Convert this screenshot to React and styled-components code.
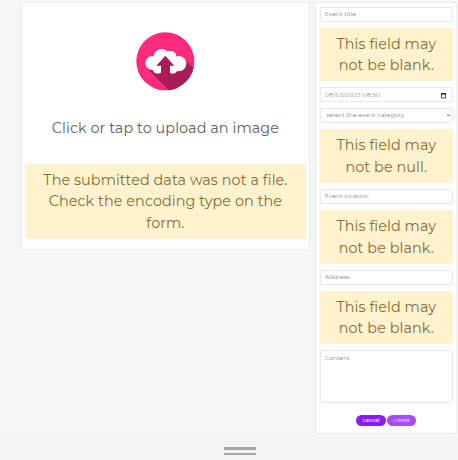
import React from "react";
import styled, { createGlobalStyle } from "styled-components";

const GlobalStyle = createGlobalStyle`
  * { box-sizing: border-box; }
  body {
    margin: 0;
    background: #f3f7f8;
    font-family: Montserrat, Inter, "Liberation Sans", sans-serif;
  }
`;

const Page = styled.div`
  height: 460px;
  display: flex;
  flex-direction: column;
  overflow: hidden;
`;

const Columns = styled.main`
  height: 437px;
  padding: 2px 1px 0 21px;
  display: flex;
  align-items: flex-start;
  gap: 5px;
`;

const Panel = styled.section`
  background: #fff;
  border: 1px solid #e9edee;
  border-radius: 2px;
`;

const UploadPanel = styled(Panel)`
  width: 289px;
  height: 248px;
  padding: 29px 3.4px 0 3.2px;
  display: flex;
  flex-direction: column;
  align-items: center;
`;

const FormPanel = styled(Panel)`
  width: 142px;
  height: 432px;
  padding: 3.6px 3px 0 3.5px;
  display: flex;
  flex-direction: column;
  gap: 6px;
`;

const UploadIcon = styled.svg`
  width: 60px;
  height: 60px;
  flex: none;
`;

const UploadLabel = styled.div`
  margin: 25px 0 25px;
  font-size: 14.4px;
  font-weight: 400;
  line-height: 22px;
  letter-spacing: 0.06px;
  color: #5c6268;
  white-space: nowrap;
`;

const Alert = styled.div`
  width: 100%;
  height: ${(p) => p.$height || 53.7}px;
  padding-top: ${(p) => p.$top || 6.1}px;
  flex: none;
  background: #fff2cf;
  border-radius: 2px;
  color: #8a6c30;
  font-size: 14.4px;
  font-weight: 400;
  line-height: 21.6px;
  letter-spacing: 0.06px;
  text-align: center;
  white-space: nowrap;
`;

const Field = styled.div`
  height: ${(p) => p.$height || 15}px;
  flex: none;
  padding: 0.6px 4.6px 0;
  display: flex;
  align-items: center;
  justify-content: space-between;
  border: 1px solid #e7eaec;
  border-radius: 2px;
  color: #7d858d;
  font-size: 6.1px;
  line-height: 13px;
  letter-spacing: ${(p) => p.$spacing || 0}px;
  white-space: nowrap;
`;

const SelectField = styled(Field)`
  padding: 0 1px 0 6px;
`;

const ContentField = styled(Field)`
  align-items: flex-start;
`;

const SmallIcon = styled.svg`
  width: ${(p) => p.$size}px;
  height: ${(p) => p.$size}px;
  flex: none;
`;

const Actions = styled.div`
  margin-top: 6px;
  display: flex;
  justify-content: center;
  gap: 1px;
`;

const Button = styled.button`
  width: 29.5px;
  height: 11px;
  padding: 0;
  border: 0;
  border-radius: 6px;
  background: ${(p) => (p.$muted ? "#a84bff" : "#8c1aff")};
  color: ${(p) => (p.$muted ? "#ead5ff" : "#fff")};
  font: 500 5.2px/11px Montserrat, Inter, sans-serif;
`;

const Footer = styled.footer`
  height: 23px;
  background: #f1f3f5;
  padding: 10px 0 0 224px;
  display: flex;
  flex-direction: column;
  gap: 3px;
`;

const Grip = styled.div`
  width: 32px;
  height: 2.5px;
  background: #a6a6a6;
`;

function CloudUpload() {
  return (
    <UploadIcon viewBox="-3 0 180 180">
      <defs>
        <clipPath id="disc"><circle cx="88" cy="88" r="87" /></clipPath>
      </defs>
      <circle cx="88" cy="88" r="87" fill="#ff2a7b" />
      <path clipPath="url(#disc)" d="M35 110 L103 180 H180 V114 L142 80 Z" fill="#a81d57" />
      <g fill="#fff">
        <circle cx="49" cy="93" r="21" />
        <circle cx="77" cy="76" r="25" />
        <circle cx="104" cy="73" r="17" />
        <circle cx="128" cy="95" r="23" />
        <circle cx="65" cy="110" r="15" />
        <circle cx="110" cy="110" r="15" />
        <path d="M48 80 H124 V116 H54 Z" />
      </g>
      <path d="M88 71 L115 101 H102 V128 H75 V101 H61 Z" fill="#a81d57" />
    </UploadIcon>
  );
}

function BlankAlert({ word = "blank" }) {
  return <Alert>This field may<br />not be {word}.</Alert>;
}

export default function App() {
  return (
    <Page>
      <GlobalStyle />
      <Columns>
        <UploadPanel>
          <CloudUpload />
          <UploadLabel>Click or tap to upload an image</UploadLabel>
          <Alert $height={75} $top={5.8}>
            The submitted data was not a file.<br />
            Check the encoding type on the<br />
            form.
          </Alert>
        </UploadPanel>
        <FormPanel>
          <Field>Event title</Field>
          <BlankAlert />
          <Field $spacing={0.2}>
            08/03/2023 08:50
            <SmallIcon $size={7} viewBox="0 0 7 7">
              <path d="M1.4 1.7H5.6V6H1.4Z" fill="none" stroke="#222" strokeWidth=".8" />
              <path d="M1 1.2H6V2.5H1Z" fill="#222" />
            </SmallIcon>
          </Field>
          <SelectField $spacing={0.04}>
            select the event category
            <SmallIcon $size={5} viewBox="0 0 5 5">
              <path d="M1 1.6L2.5 3.1L4 1.6" fill="none" stroke="#555" />
            </SmallIcon>
          </SelectField>
          <BlankAlert word="null" />
          <Field>Event location</Field>
          <BlankAlert />
          <Field>Address</Field>
          <BlankAlert />
          <ContentField $height={52.5}>Content</ContentField>
          <Actions>
            <Button>cancel</Button>
            <Button $muted>create</Button>
          </Actions>
        </FormPanel>
      </Columns>
      <Footer>
        <Grip />
        <Grip />
      </Footer>
    </Page>
  );
}
